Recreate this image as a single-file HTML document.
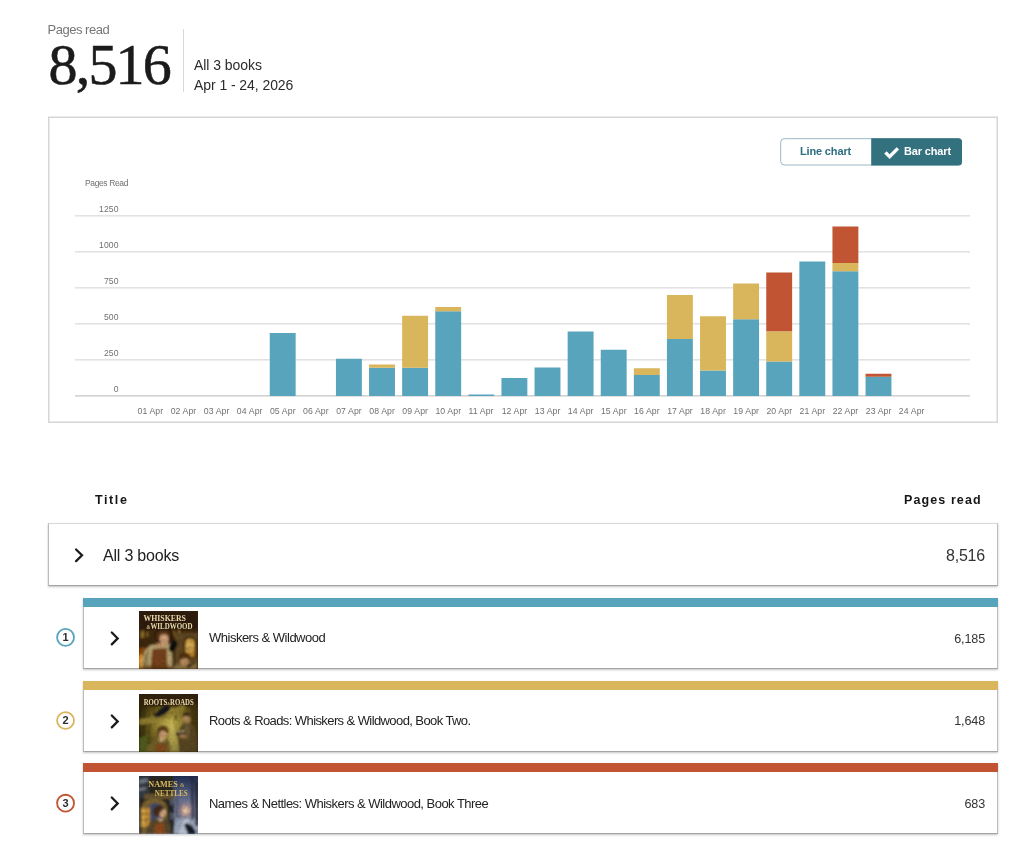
<!DOCTYPE html>
<html lang="en">
<head>
<meta charset="utf-8">
<title>Pages read</title>
<style>
html,body{margin:0;padding:0;background:#fff;}
body{width:1024px;height:856px;position:relative;overflow:hidden;will-change:transform;font-family:"Liberation Sans",sans-serif;color:#222;}
.abs{position:absolute;white-space:nowrap;}
#lbl{left:47.5px;top:22px;font-size:13px;line-height:16px;color:#767676;letter-spacing:-0.48px;}
#big{left:48.5px;top:31.5px;font-family:"Liberation Serif",serif;font-weight:normal;-webkit-text-stroke:0.55px #1b1b1b;font-size:58px;line-height:66px;color:#1b1b1b;letter-spacing:-1.8px;}
#vdiv{left:183px;top:29px;width:1px;height:63px;background:#d8d8d8;}
#sub1{left:194px;top:56.8px;font-size:14px;line-height:17px;color:#2b2b2b;letter-spacing:-0.05px;}
#sub2{left:194px;top:77px;font-size:14px;line-height:17px;color:#2b2b2b;letter-spacing:-0.07px;}
.yl{position:absolute;width:60px;left:58.7px;text-align:right;font-size:8.6px;line-height:10px;color:#707070;letter-spacing:0.15px;}
.xl{position:absolute;top:405.5px;font-size:8.7px;line-height:10px;color:#707070;letter-spacing:0.1px;white-space:nowrap;}
#ylab{left:85px;top:178.3px;font-size:8.5px;line-height:10px;color:#707070;letter-spacing:-0.37px;}
#btns{left:780px;top:138px;width:182px;height:27px;}
#b1{position:absolute;left:0;top:0;width:91px;height:27px;box-sizing:border-box;color:#2f6f80;font-weight:bold;font-size:11px;line-height:27px;text-align:center;letter-spacing:-0.15px;}
#b2{position:absolute;left:91px;top:0;width:91px;height:27px;box-sizing:border-box;color:#fff;font-weight:bold;font-size:11px;line-height:27.4px;letter-spacing:-0.15px;}
#b2 svg{position:absolute;left:13px;top:8.5px;}
#b2 span{position:absolute;left:33px;top:0;}
.th{font-weight:bold;font-size:12.5px;line-height:15px;letter-spacing:1.1px;color:#161616;}
.box{position:absolute;background:#fff;border:1px solid #bcbcbc;border-top-color:#d9d9d9;border-bottom-color:#a4a4a4;box-sizing:border-box;box-shadow:0 1px 2px rgba(0,0,0,.24);}
.row{left:83px;width:915px;height:71px;}
.bar{position:absolute;left:-1px;right:-1px;top:-1px;height:9px;}
.ttl{position:absolute;left:125px;top:31.2px;font-size:13px;line-height:15px;color:#222;letter-spacing:-0.5px;white-space:nowrap;}
.val{position:absolute;right:12px;top:31.5px;font-size:12.6px;line-height:15px;color:#333;letter-spacing:-0.15px;}
.chev{position:absolute;}
.cov{position:absolute;left:54.5px;top:12px;width:59px;height:58px;overflow:hidden;}.cov svg{display:block;}
</style>
</head>
<body>
<div class="abs" id="lbl">Pages read</div>
<div class="abs" id="big">8,516</div>
<div class="abs" id="vdiv"></div>
<div class="abs" id="sub1">All 3 books</div>
<div class="abs" id="sub2">Apr 1 - 24, 2026</div>

<div class="abs" id="ylab">Pages Read</div>
<div class="yl" style="top:204px">1250</div>
<div class="yl" style="top:240px">1000</div>
<div class="yl" style="top:276px">750</div>
<div class="yl" style="top:312px">500</div>
<div class="yl" style="top:348px">250</div>
<div class="yl" style="top:384px">0</div>
<svg class="abs" style="left:0;top:0" width="1024" height="430" viewBox="0 0 1024 430">
<rect x="48.75" y="117.25" width="948.5" height="305" fill="none" stroke="#d6d6d6" stroke-width="1.5"/>
<rect x="75" y="215" width="895" height="1" fill="#e2e2e2"/><rect x="75" y="216" width="895" height="1" fill="#eeeeee"/>
<rect x="75" y="251" width="895" height="1" fill="#e2e2e2"/><rect x="75" y="252" width="895" height="1" fill="#eeeeee"/>
<rect x="75" y="287" width="895" height="1" fill="#e2e2e2"/><rect x="75" y="288" width="895" height="1" fill="#eeeeee"/>
<rect x="75" y="323" width="895" height="1" fill="#e2e2e2"/><rect x="75" y="324" width="895" height="1" fill="#eeeeee"/>
<rect x="75" y="359" width="895" height="1" fill="#e2e2e2"/><rect x="75" y="360" width="895" height="1" fill="#eeeeee"/>
<rect x="75" y="395" width="895" height="1" fill="#d3d3d3"/><rect x="75" y="396" width="895" height="1" fill="#e2e2e2"/>
<rect x="269.75" y="333.00" width="25.9" height="63.00" fill="#58a4bd"/>
<rect x="335.95" y="358.75" width="25.9" height="37.25" fill="#58a4bd"/>
<rect x="369.05" y="367.75" width="25.9" height="28.25" fill="#58a4bd"/>
<rect x="369.05" y="364.50" width="25.9" height="3.25" fill="#d9b55c"/>
<rect x="402.15" y="367.75" width="25.9" height="28.25" fill="#58a4bd"/>
<rect x="402.15" y="315.75" width="25.9" height="52.00" fill="#d9b55c"/>
<rect x="435.25" y="311.25" width="25.9" height="84.75" fill="#58a4bd"/>
<rect x="435.25" y="307.00" width="25.9" height="4.25" fill="#d9b55c"/>
<rect x="468.35" y="394.50" width="25.9" height="1.50" fill="#58a4bd"/>
<rect x="501.45" y="378.00" width="25.9" height="18.00" fill="#58a4bd"/>
<rect x="534.55" y="367.50" width="25.9" height="28.50" fill="#58a4bd"/>
<rect x="567.65" y="331.50" width="25.9" height="64.50" fill="#58a4bd"/>
<rect x="600.75" y="349.75" width="25.9" height="46.25" fill="#58a4bd"/>
<rect x="633.85" y="375.00" width="25.9" height="21.00" fill="#58a4bd"/>
<rect x="633.85" y="368.25" width="25.9" height="6.75" fill="#d9b55c"/>
<rect x="666.95" y="339.00" width="25.9" height="57.00" fill="#58a4bd"/>
<rect x="666.95" y="295.00" width="25.9" height="44.00" fill="#d9b55c"/>
<rect x="700.05" y="370.50" width="25.9" height="25.50" fill="#58a4bd"/>
<rect x="700.05" y="316.25" width="25.9" height="54.25" fill="#d9b55c"/>
<rect x="733.15" y="319.25" width="25.9" height="76.75" fill="#58a4bd"/>
<rect x="733.15" y="283.50" width="25.9" height="35.75" fill="#d9b55c"/>
<rect x="766.25" y="361.50" width="25.9" height="34.50" fill="#58a4bd"/>
<rect x="766.25" y="331.25" width="25.9" height="30.25" fill="#d9b55c"/>
<rect x="766.25" y="272.50" width="25.9" height="58.75" fill="#c05433"/>
<rect x="799.35" y="261.50" width="25.9" height="134.50" fill="#58a4bd"/>
<rect x="832.45" y="271.25" width="25.9" height="124.75" fill="#58a4bd"/>
<rect x="832.45" y="263.00" width="25.9" height="8.25" fill="#d9b55c"/>
<rect x="832.45" y="226.50" width="25.9" height="36.50" fill="#c05433"/>
<rect x="865.55" y="376.75" width="25.9" height="19.25" fill="#58a4bd"/>
<rect x="865.55" y="373.75" width="25.9" height="3.00" fill="#c05433"/>
</svg>
<span class="xl" style="left:137.55px">01 Apr</span>
<span class="xl" style="left:170.65px">02 Apr</span>
<span class="xl" style="left:203.75px">03 Apr</span>
<span class="xl" style="left:236.85px">04 Apr</span>
<span class="xl" style="left:269.95px">05 Apr</span>
<span class="xl" style="left:303.05px">06 Apr</span>
<span class="xl" style="left:336.15px">07 Apr</span>
<span class="xl" style="left:369.25px">08 Apr</span>
<span class="xl" style="left:402.35px">09 Apr</span>
<span class="xl" style="left:435.45px">10 Apr</span>
<span class="xl" style="left:468.55px">11 Apr</span>
<span class="xl" style="left:501.65px">12 Apr</span>
<span class="xl" style="left:534.75px">13 Apr</span>
<span class="xl" style="left:567.85px">14 Apr</span>
<span class="xl" style="left:600.95px">15 Apr</span>
<span class="xl" style="left:634.05px">16 Apr</span>
<span class="xl" style="left:667.15px">17 Apr</span>
<span class="xl" style="left:700.25px">18 Apr</span>
<span class="xl" style="left:733.35px">19 Apr</span>
<span class="xl" style="left:766.45px">20 Apr</span>
<span class="xl" style="left:799.55px">21 Apr</span>
<span class="xl" style="left:832.65px">22 Apr</span>
<span class="xl" style="left:865.75px">23 Apr</span>
<span class="xl" style="left:898.85px">24 Apr</span>
<svg class="abs" style="left:770px;top:130px" width="200" height="44" viewBox="770 130 200 44"><rect x="780.7" y="138.7" width="180.8" height="26.3" rx="3.5" fill="#fff" stroke="#9bbac4" stroke-width="1"/><path d="M871.2 138.2 H958.5 a3.5 3.5 0 0 1 3.5 3.5 V162 a3.5 3.5 0 0 1 -3.5 3.5 H871.2 Z" fill="#34717f"/></svg>
<div class="abs" id="btns">
  <div id="b1">Line chart</div>
  <div id="b2"><svg width="16" height="13" viewBox="0 0 16 13"><path d="M0.5 6.7 L2.6 4.6 L5.6 7.6 L12.7 0.5 L14.8 2.6 L5.6 11.8 Z" fill="#fff" stroke="#fff" stroke-width=".5" stroke-linejoin="round"/></svg><span>Bar chart</span></div>
</div>

<div class="abs th" style="left:95px;top:493px;letter-spacing:1.6px">Title</div>
<div class="abs th" style="left:904px;top:493px">Pages read</div>

<div class="box" style="left:48px;top:523px;width:950px;height:63px;">
  <svg class="chev" style="left:23px;top:22px" width="14" height="18" viewBox="0 0 14 18"><path d="M4.1 3.5 L10 9.3 L4.1 15.1" fill="none" stroke="#1c1c1c" stroke-width="2.3" stroke-linecap="round" stroke-linejoin="miter"/></svg>
  <div class="abs" style="left:54px;top:21.8px;font-size:16px;line-height:20px;color:#222;letter-spacing:-0.2px;">All 3 books</div>
  <div class="abs" style="right:12px;top:21.8px;font-size:16px;line-height:20px;color:#333;letter-spacing:-0.2px;">8,516</div>
</div>

<svg class="abs" style="left:52px;top:623px" width="28" height="28" viewBox="0 0 28 28"><circle cx="13.55" cy="14.40" r="8.45" fill="#fff" stroke="#58a4bd" stroke-width="1.8"/><text x="13.55" y="18.30" text-anchor="middle" font-family="'Liberation Sans',sans-serif" font-weight="bold" font-size="11" fill="#2e2e2e">1</text></svg>
<div class="box row" style="top:598px">
  <div class="bar" style="background:#58a4bd"></div>
  <svg class="chev" style="left:24px;top:30px" width="14" height="18" viewBox="0 0 14 18"><path d="M3.8 3.5 L9.7 9.4 L3.8 15.4" fill="none" stroke="#1c1c1c" stroke-width="2.3" stroke-linecap="round" stroke-linejoin="miter"/></svg>
  <div class="cov"><svg width="59" height="58" viewBox="0 0 59 58">
<defs>
<filter id="f1" x="-10%" y="-10%" width="120%" height="120%"><feGaussianBlur stdDeviation="0.8"/></filter>
<radialGradient id="g1w" cx="50%" cy="40%" r="60%"><stop offset="0" stop-color="#f5d777"/><stop offset="1" stop-color="#a86f22"/></radialGradient>
<filter id="n1" x="0" y="0" width="100%" height="100%"><feTurbulence type="fractalNoise" baseFrequency="0.35" numOctaves="2" seed="4" result="t"/><feColorMatrix type="matrix" values="0 0 0 0 0  0 0 0 0 0  0 0 0 0 0  1.6 0 0 0 -0.55"/></filter>
</defs>
<rect width="59" height="58" fill="#3a250c"/>
<g filter="url(#f1)">
<rect x="0" y="0" width="59" height="19" fill="#2f1d08"/>
<rect x="0" y="19" width="59" height="8" fill="#42290c"/>
<rect x="2" y="20" width="3" height="7" fill="#8a6a2c"/><rect x="7" y="21" width="2" height="5" fill="#7a5a20"/><rect x="33" y="20" width="3" height="6" fill="#7d5c22"/><rect x="39" y="19" width="2" height="6" fill="#8a6628"/>
<rect x="0" y="27" width="16" height="10" fill="#3e270d"/><ellipse cx="25" cy="25" rx="10" ry="8" fill="#2e1c08"/>
<rect x="36" y="22" width="23" height="32" fill="#5f4720"/>
<rect x="0" y="37" width="7" height="21" fill="#8a4c10"/>
<ellipse cx="1.500" cy="50" rx="2.500" ry="7" fill="#e8921e"/>
<path d="M44.500 47 V33 Q44.500 25.500 51 25.500 Q57.500 25.500 57.500 33 V47 Z" fill="#2e2009"/>
<path d="M46 46 V33.500 Q46 27.300 51 27.300 Q56 27.300 56 33.500 V46 Z" fill="url(#g1w)"/>
<path d="M51 27.300 V46 M46 37 H56" stroke="#8a6424" stroke-width=".7"/>
<path d="M2.500 57 Q2 40 12 34 L30 32 Q35 40 33.500 57 Z" fill="#b5a06e"/>
<path d="M4 57 Q4 44 10 38 L8 57 Z" fill="#8e7a4c"/>
<path d="M13.500 38 L27.500 37 L28.500 57 L11.500 57 Z" fill="#74401a"/>
<path d="M17 32 Q19 40 26 33 Z" fill="#c29068"/>
<ellipse cx="25" cy="28" rx="4.600" ry="5.800" fill="#d3a27a"/>
<path d="M22 30 Q25 32 28 29" stroke="#8a5a3a" stroke-width=".6" fill="none"/>
<path d="M17.500 28 Q16.500 18.500 25 19.500 Q32 19.500 31 27 Q28 22.500 23 23.500 Q20 25.500 20 31 Z" fill="#5c3512"/>
<path d="M29.500 38.500 Q30.500 31 36 29 Q39.500 30 38 35 Q36 40.500 31.500 41 Z" fill="#100e0c"/>
<ellipse cx="45.500" cy="50.500" rx="4.500" ry="4.800" fill="#b48659"/>
<path d="M40 49.500 Q39.500 41 46 41.500 Q52 42 51.500 49 Q46 45 40 49.500 Z" fill="#4e2e0e"/>
<path d="M33.500 58 Q36 52 41 53.500 L50 56.500 L58 52 V58 Z" fill="#877245"/>
<rect x="3" y="54" width="30" height="4" fill="#5a3c18" opacity=".5"/>
</g>
<rect width="59" height="58" filter="url(#n1)" opacity=".14"/>
<g font-family="'Liberation Serif',serif" font-weight="bold" fill="#eadcae" text-anchor="middle">
<text x="25.700" y="10.400" font-size="7.600" textLength="42.500" lengthAdjust="spacingAndGlyphs">WHISKERS</text>
<text x="30.500" y="18" font-size="7.600" textLength="46" lengthAdjust="spacingAndGlyphs"><tspan font-size="5.500" font-style="italic" fill="#cdbb85">&amp;</tspan>WILDWOOD</text>
</g>
</svg>
</div>
  <div class="ttl" style="letter-spacing:-0.5px;top:31.2px">Whiskers &amp; Wildwood</div>
  <div class="val" style="top:32.5px">6,185</div>
</div>
<svg class="abs" style="left:52px;top:706px" width="28" height="28" viewBox="0 0 28 28"><circle cx="13.55" cy="14.50" r="8.45" fill="#fff" stroke="#d9b55c" stroke-width="1.8"/><text x="13.55" y="18.40" text-anchor="middle" font-family="'Liberation Sans',sans-serif" font-weight="bold" font-size="11" fill="#2e2e2e">2</text></svg>
<div class="box row" style="top:681px">
  <div class="bar" style="background:#d9b55c"></div>
  <svg class="chev" style="left:24px;top:30px" width="14" height="18" viewBox="0 0 14 18"><path d="M3.8 3.5 L9.7 9.4 L3.8 15.4" fill="none" stroke="#1c1c1c" stroke-width="2.3" stroke-linecap="round" stroke-linejoin="miter"/></svg>
  <div class="cov"><svg width="59" height="58" viewBox="0 0 59 58">
<defs>
<filter id="f2" x="-10%" y="-10%" width="120%" height="120%"><feGaussianBlur stdDeviation="0.8"/></filter>
<radialGradient id="g2" cx="52%" cy="52%" r="55%"><stop offset="0" stop-color="#c4b352"/><stop offset=".55" stop-color="#7d6d24"/><stop offset="1" stop-color="#2e2508"/></radialGradient>
<filter id="n2" x="0" y="0" width="100%" height="100%"><feTurbulence type="fractalNoise" baseFrequency="0.35" numOctaves="2" seed="5" result="t"/><feColorMatrix type="matrix" values="0 0 0 0 0  0 0 0 0 0  0 0 0 0 0  1.6 0 0 0 -0.55"/></filter>
</defs>
<rect width="59" height="58" fill="url(#g2)"/>
<g filter="url(#f2)">
<rect x="0" y="0" width="59" height="12.500" fill="#33230a"/>
<rect x="3" y="12" width="3" height="46" fill="#3a300e" opacity=".8"/>
<rect x="9" y="12" width="2" height="30" fill="#4a3d12" opacity=".8"/>
<rect x="14" y="12" width="2" height="12" fill="#4a3a10"/>
<rect x="52" y="10" width="7" height="48" fill="#43330f" opacity=".85"/>
<rect x="36" y="12" width="2" height="14" fill="#54441a" opacity=".8"/>
<path d="M27 58 L33 24 L41 58 Z" fill="#d9ca6e" opacity=".5"/>
<path d="M0 44 L10 40 L8 58 L0 58 Z" fill="#4f5a1c"/>
<path d="M0 25.500 Q20 24 44 11 L46.500 14 Q24 29.500 0 30.500 Z" fill="#a08c38"/>
<path d="M0 28 Q20 27 45 13" stroke="#5d4d18" stroke-width="1" fill="none"/>
<path d="M15 22.500 Q19 14.500 27 12 Q32.500 12 30.500 16 Q26 22 17 23.500 Z" fill="#14161a"/>
<ellipse cx="47.500" cy="24.500" rx="3.700" ry="4.700" fill="#ad8558"/>
<path d="M44.500 27 Q47.500 31 50.500 27 L50 29.500 L45 29.500 Z" fill="#6b5030"/>
<path d="M43.500 23 Q44 17.500 48 18 Q52.500 18.500 51.500 23.500 Q48 21 43.500 23 Z" fill="#3f2c12"/>
<path d="M40 58 Q38 36 44 30 L53 30 Q59 36 58 58 Z" fill="#574520"/>
<path d="M45 31 L51 31 L50 45 L46 45 Z" fill="#6b5a30"/>
<path d="M36.500 38 L46 36.500 L47 40 L37.500 42 Z" fill="#2a1e0e"/>
<path d="M37.500 38.300 L46 37.200" stroke="#d3c392" stroke-width="1"/>
<ellipse cx="43.500" cy="42" rx="3.200" ry="2" fill="#a0764a"/>
<ellipse cx="23.800" cy="40" rx="4.200" ry="5.300" fill="#c99e72"/>
<path d="M21 42.500 Q24 44 27 41.500" stroke="#8a5e3c" stroke-width=".6" fill="none"/>
<path d="M18 42 Q17 31.500 24 32 Q30.500 32.500 29.500 40 Q26 36 22 37 Q19.500 39 20 45.500 Z" fill="#5a3a14"/>
<path d="M6.500 58 Q8 48 17 45 L29 45 Q32.500 50 31.500 58 Z" fill="#6f5e27"/>
<path d="M17 50 L27 49 L28 58 L16 58 Z" fill="#7c481c"/>
<path d="M19 44.500 Q22.500 51 26.500 45 Z" fill="#caa97c"/>
</g>
<rect width="59" height="58" filter="url(#n2)" opacity=".14"/>
<g font-family="'Liberation Serif',serif" font-weight="bold" fill="#ecdfae" text-anchor="middle">
<text x="29.700" y="10.600" font-size="7.800" textLength="50" lengthAdjust="spacingAndGlyphs">ROOTS<tspan font-size="4" font-style="italic" fill="#cdbb85">&amp;</tspan>ROADS</text>
</g>
</svg>
</div>
  <div class="ttl" style="letter-spacing:-0.59px;top:31.2px">Roots &amp; Roads: Whiskers &amp; Wildwood, Book Two.</div>
  <div class="val" style="top:31.7px">1,648</div>
</div>
<svg class="abs" style="left:52px;top:789px" width="28" height="28" viewBox="0 0 28 28"><circle cx="13.55" cy="14.20" r="8.45" fill="#fff" stroke="#c05433" stroke-width="1.8"/><text x="13.55" y="18.10" text-anchor="middle" font-family="'Liberation Sans',sans-serif" font-weight="bold" font-size="11" fill="#2e2e2e">3</text></svg>
<div class="box row" style="top:763px">
  <div class="bar" style="background:#c05433"></div>
  <svg class="chev" style="left:24px;top:30px" width="14" height="18" viewBox="0 0 14 18"><path d="M3.8 3.5 L9.7 9.4 L3.8 15.4" fill="none" stroke="#1c1c1c" stroke-width="2.3" stroke-linecap="round" stroke-linejoin="miter"/></svg>
  <div class="cov"><svg width="59" height="58" viewBox="0 0 59 58">
<defs>
<filter id="f3" x="-10%" y="-10%" width="120%" height="120%"><feGaussianBlur stdDeviation="0.8"/></filter>
<radialGradient id="g3" cx="50%" cy="50%" r="50%"><stop offset="0" stop-color="#f6dba4"/><stop offset=".3" stop-color="#c2a097"/><stop offset="1" stop-color="#56638a" stop-opacity="0"/></radialGradient>
<linearGradient id="g3s" x1="0" y1="0" x2="0" y2="1"><stop offset="0" stop-color="#1f2d52"/><stop offset=".45" stop-color="#6d7593"/><stop offset="1" stop-color="#8f99ae"/></linearGradient>
<linearGradient id="g3w" x1="0" y1="0" x2="1" y2="0"><stop offset="0" stop-color="#e8b24a"/><stop offset="1" stop-color="#b98630"/></linearGradient>
<filter id="n3" x="0" y="0" width="100%" height="100%"><feTurbulence type="fractalNoise" baseFrequency="0.35" numOctaves="2" seed="6" result="t"/><feColorMatrix type="matrix" values="0 0 0 0 0  0 0 0 0 0  0 0 0 0 0  1.6 0 0 0 -0.55"/></filter>
</defs>
<rect width="59" height="58" fill="url(#g3s)"/>
<g filter="url(#f3)">
<circle cx="46.500" cy="34.500" r="12" fill="url(#g3)"/>
<path d="M33 58 L39 43 L55 42 L59 48 V58 Z" fill="#9aa4b8"/>
<path d="M40 58 L45 43 L49 43 L51 58 Z" fill="#bcc4d4"/>
<rect x="52.500" y="0" width="2" height="44" fill="#262838"/>
<rect x="56.500" y="6" width="2.500" height="44" fill="#22242f"/>
<rect x="37.500" y="22" width="1.200" height="20" fill="#33364a"/>
<rect x="41" y="26" width="1" height="15" fill="#3d4056"/>
<rect x="0" y="0" width="34" height="58" fill="#29251b"/>
<rect x="0" y="0" width="10" height="22" fill="#33373f"/>
<path d="M0 4 L8 2 L9 6 L0 8 Z M0 12 L7 11 L7 14 L0 15 Z" fill="#8d949e" opacity=".7"/>
<rect x="30" y="19" width="5" height="39" fill="#23252a"/>
<path d="M31 22 L35 24 L34 30 L31 28 Z M31 36 L35 38 L34 44 L31 43 Z" fill="#6b717c" opacity=".7"/>
<rect x="5" y="18" width="30" height="5" fill="#65552f"/>
<path d="M2.500 58 V34 Q2.500 22.500 15 22.500 Q27.500 22.500 28.500 34 V58 Z" fill="#7a6231"/>
<path d="M8 58 V36 Q9 27 17 27 Q24.500 28 24.500 36 V58 Z" fill="#434b66"/>
<rect x="2.500" y="32" width="8.500" height="19" fill="url(#g3w)"/>
<path d="M2.500 38 H11 M2.500 44 H11 M6.700 32 V51" stroke="#7a5a20" stroke-width=".7"/>
<ellipse cx="23.300" cy="36.500" rx="3.700" ry="4.900" fill="#cfa47c"/>
<path d="M14 35.500 Q14.500 28.500 21 29.500 Q25.500 29.500 25.500 33 Q21 34 20 40.500 Q15 41.500 14 35.500 Z" fill="#43291a"/>
<path d="M6.500 58 Q8 46 16 43 L28 43 Q33 48 32 58 Z" fill="#55472a"/>
<path d="M16 48 L25 47 L26 58 L15 58 Z" fill="#8c4a1e"/>
<path d="M18 42 Q21 48.500 25 43 Z" fill="#c6a27c"/>
<path d="M45 49 Q47 46 50 48 Q56 51 57 58 L49 58 Q47 54 46 51 Z" fill="#171a25"/>
</g>
<rect width="59" height="58" filter="url(#n3)" opacity=".14"/>
<g font-family="'Liberation Serif',serif" font-weight="bold" fill="#d8ba64" text-anchor="middle">
<text x="27.500" y="10.800" font-size="8.400" textLength="36.500" lengthAdjust="spacingAndGlyphs">NAMES <tspan font-size="6" fill="#b89c58">&amp;</tspan></text>
<text x="32.300" y="19.500" font-size="8.400" textLength="33" lengthAdjust="spacingAndGlyphs">NETTLES</text>
</g>
</svg>
</div>
  <div class="ttl" style="letter-spacing:-0.53px;top:31.8px">Names &amp; Nettles: Whiskers &amp; Wildwood, Book Three</div>
  <div class="val" style="top:32.9px">683</div>
</div>
</body>
</html>
